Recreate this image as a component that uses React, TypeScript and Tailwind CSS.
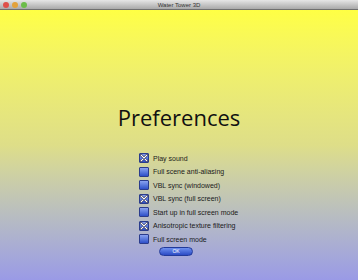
import React from 'react';

const options = [
  { label: 'Play sound', checked: true },
  { label: 'Full scene anti-aliasing', checked: false },
  { label: 'VBL sync (windowed)', checked: false },
  { label: 'VBL sync (full screen)', checked: true },
  { label: 'Start up in full screen mode', checked: false },
  { label: 'Anisotropic texture filtering', checked: true },
  { label: 'Full screen mode', checked: false },
];

const Box: React.FC<{ checked: boolean }> = ({ checked }) => (
  <div className="w-[10px] h-[10px] rounded-[1px] border border-[#2a3c8c] bg-gradient-to-b from-[#8aa2f0] to-[#2f4fc8] flex items-center justify-center shrink-0">
    {checked && (
      <svg width="8" height="8" viewBox="0 0 8 8">
        <path d="M1 1 L7 7 M7 1 L1 7" stroke="#1a1a40" strokeWidth="2.4" strokeLinecap="round" />
        <path d="M1 1 L7 7 M7 1 L1 7" stroke="#ffffff" strokeWidth="1.1" strokeLinecap="round" />
      </svg>
    )}
  </div>
);

export default function App() {
  return (
    <div className="w-[358px] h-[280px] flex flex-col overflow-hidden" style={{ fontFamily: '"Liberation Sans", sans-serif' }}>
      {/* title bar */}
      <div className="h-[10px] relative flex items-center justify-center bg-gradient-to-b from-[#e6e6e6] to-[#a9a9a9] border-b border-[#6f6f6f]">
        <div className="absolute left-[3px] top-[2px] flex gap-[3px]">
          <span className="w-[6px] h-[6px] rounded-full bg-[#e0504a]" />
          <span className="w-[6px] h-[6px] rounded-full bg-[#e3a23a]" />
          <span className="w-[6px] h-[6px] rounded-full bg-[#6cbd4a]" />
        </div>
        <span className="text-[6px] leading-none text-[#333]">Water Tower 3D</span>
      </div>
      <div className="flex-1 flex flex-col items-center bg-gradient-to-b from-[#ffff44] via-[#dede88] to-[#9a9ae6]">
        <h1 className="mt-[94px] text-[22px] leading-[26px] text-[#111]" style={{ fontFamily: '"Open Sans", sans-serif' }}>
          Preferences
        </h1>
        <div className="mt-[23px] flex flex-col gap-[3.5px] self-start pl-[139px]">
          {options.map((o) => (
            <div key={o.label} className="flex items-center gap-[4px] h-[10px]">
              <Box checked={o.checked} />
              <span className="text-[7px] leading-none text-[#1a1a1a]">{o.label}</span>
            </div>
          ))}
        </div>
        <button className="mt-[3px] self-start ml-[159px] w-[34px] h-[9px] rounded-full bg-gradient-to-b from-[#6f8ff0] to-[#2c4ac4] border border-[#223a9a] text-white text-[5px] leading-none flex items-center justify-center">
          OK
        </button>
      </div>
    </div>
  );
}
